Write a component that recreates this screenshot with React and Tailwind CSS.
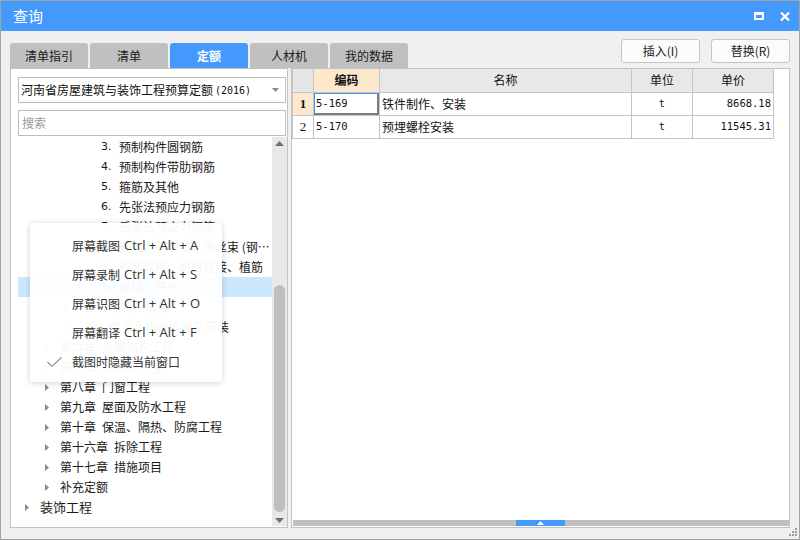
import React from 'react';

const tabs = ['清单指引', '清单', '定额', '人材机', '我的数据'];

// lv: 0 = 顶层, 1 = 章, 2 = 节, 3 = 叶子 (带序号)
const tree = [
  { lv: 3, num: '3.', t: '预制构件圆钢筋' },
  { lv: 3, num: '4.', t: '预制构件带肋钢筋' },
  { lv: 3, num: '5.', t: '箍筋及其他' },
  { lv: 3, num: '6.', t: '先张法预应力钢筋' },
  { lv: 3, num: '7.', t: '后张法预应力钢筋' },
  { lv: 3, num: '8.', t: '预应力钢绞线、钢丝束 (钢…' },
  { lv: 3, num: '9.', t: '钢筋焊接、机械连接、植筋' },
  { lv: 3, num: '10.', t: '螺栓、铁件', sel: true },
  { lv: 2, t: '三、混凝土模板' },
  { lv: 2, t: '四、混凝土构件运输及安装' },
  { lv: 1, t: '第六章\u2002金属结构工程' },
  { lv: 1, t: '第七章\u2002木结构工程' },
  { lv: 1, t: '第八章\u2002门窗工程' },
  { lv: 1, t: '第九章\u2002屋面及防水工程' },
  { lv: 1, t: '第十章\u2002保温、隔热、防腐工程' },
  { lv: 1, t: '第十六章\u2002拆除工程' },
  { lv: 1, t: '第十七章\u2002措施项目' },
  { lv: 1, t: '补充定额' },
  { lv: 0, t: '装饰工程' },
];

const indent = ['pl-[6px]', 'pl-[26px]', 'pl-[46px]'];

const menu = [
  ['屏幕截图', 'Ctrl + Alt + A'],
  ['屏幕录制', 'Ctrl + Alt + S'],
  ['屏幕识图', 'Ctrl + Alt + O'],
  ['屏幕翻译', 'Ctrl + Alt + F'],
];

function Arrow() {
  return (
    <svg width="4" height="7" viewBox="0 0 4 7" className="ml-[1px]">
      <path d="M0 0 L4 3.5 L0 7 Z" fill="#8a8a8a" />
    </svg>
  );
}

function TreeRow({ item }) {
  const base = 'h-[20px] flex items-center whitespace-nowrap text-[12px] text-[#1a1a1a]';
  if (item.lv === 3) {
    return (
      <div className={`${base} pl-[83px] ${item.sel ? 'bg-[#cce8ff]' : ''}`}>
        <span className="w-[18px] font-['DejaVu_Sans',sans-serif] text-[11px]">{item.num}</span>
        <span>{item.t}</span>
      </div>
    );
  }
  return (
    <div className={`${base} ${indent[item.lv]}`}>
      <span className="w-[16px] flex items-center">
        <Arrow />
      </span>
      <span className={item.lv === 0 ? 'text-[13px]' : item.lv === 2 ? 'pl-[5px]' : ''}>{item.t}</span>
    </div>
  );
}

export default function App() {
  return (
    <div className="w-[800px] h-[540px] border border-[#a3a3a3] bg-[#f0f0f0] flex flex-col relative overflow-hidden font-['Noto_Sans_CJK_SC','Liberation_Sans',sans-serif]">
      {/* title bar */}
      <div className="h-[30px] bg-[#4499fd] flex items-center pl-[12px] text-white text-[15px]">
        <span>查询</span>
        <div className="ml-auto flex items-center gap-[16px] pr-[9px]">
          <svg width="10" height="8" viewBox="0 0 10 8">
            <rect x="1" y="1.5" width="8" height="5.5" fill="none" stroke="#fff" strokeWidth="2" />
            <rect x="0" y="0" width="10" height="3" fill="#fff" />
          </svg>
          <svg width="10" height="9" viewBox="0 0 10 9">
            <path d="M1 0.5 L9 8.5 M9 0.5 L1 8.5" stroke="#fff" strokeWidth="2.2" />
          </svg>
        </div>
      </div>

      <div className="flex-1 flex flex-col pl-[9px] pr-[9px] pb-[11px]">
        {/* tabs + buttons */}
        <div className="h-[37px] flex">
          <div className="flex items-end gap-[2px]">
            {tabs.map((t) => (
              <div
                key={t}
                className={`w-[78px] h-[25px] rounded-t-[3px] flex items-center justify-center text-[12px] ${
                  t === '定额' ? 'bg-[#4499fd] text-white font-bold' : 'bg-[#c0c0c0] text-[#1a1a1a]'
                }`}
              >
                {t}
              </div>
            ))}
          </div>
          <div className="ml-auto flex gap-[11px] pt-[8px]">
            {['插入(I)', '替换(R)'].map((b) => (
              <div
                key={b}
                className="w-[79px] h-[24px] bg-[#fbfbfb] border border-[#c6c6c6] rounded-[3px] flex items-center justify-center text-[12px] text-[#222]"
              >
                {b}
              </div>
            ))}
          </div>
        </div>

        {/* panels */}
        <div className="flex-1 flex gap-[3px] min-h-0">
          {/* left */}
          <div className="w-[278px] bg-white border border-[#c3c3c3] flex flex-col">
            <div className="ml-[7px] mr-[1px] mt-[8px] h-[26px] border border-[#bdbdbd] flex items-center pl-[2px] text-[12px] text-[#111]">
              <span>河南省房屋建筑与装饰工程预算定额</span>
              <span className="font-['DejaVu_Sans_Mono',monospace] text-[10px] ml-[2px]">(2016)</span>
              <svg width="7" height="4" viewBox="0 0 7 4" className="ml-auto mr-[6px]">
                <path d="M0 0 L7 0 L3.5 4 Z" fill="#8a8a8a" />
              </svg>
            </div>
            <div className="ml-[7px] mr-[1px] mt-[7px] h-[26px] border border-[#bdbdbd] flex items-center pl-[3px] text-[12px] text-[#9a9a9a]">
              搜索
            </div>
            <div className="flex-1 flex pl-[7px] mt-[1px] mb-[1px] min-h-0">
              <div className="flex-1 overflow-hidden">
                {tree.map((it, i) => (
                  <TreeRow key={i} item={it} />
                ))}
              </div>
              {/* vertical scrollbar */}
              <div className="w-[15px] bg-[#e8e8e8] flex flex-col items-center">
                <div className="h-[12px] flex items-center justify-center">
                  <svg width="9" height="5" viewBox="0 0 9 5">
                    <path d="M0 5 L4.5 0 L9 5 Z" fill="#6f6f7a" />
                  </svg>
                </div>
                <div className="flex-1 w-full px-[2px]">
                  <div className="mt-[136px] h-[227px] rounded-full bg-[#bebebe]" />
                </div>
                <div className="h-[12px] flex items-center justify-center">
                  <svg width="9" height="5" viewBox="0 0 9 5">
                    <path d="M0 0 L9 0 L4.5 5 Z" fill="#6f6f7a" />
                  </svg>
                </div>
              </div>
            </div>
          </div>

          {/* right */}
          <div className="flex-1 bg-white border border-[#c3c3c3] flex flex-col">
            <table className="border-collapse text-[12px] text-[#111] table-fixed w-[481px]">
              <colgroup>
                <col className="w-[21px]" />
                <col className="w-[66px]" />
                <col className="w-[252px]" />
                <col className="w-[61px]" />
                <col className="w-[81px]" />
              </colgroup>
              <thead>
                <tr className="h-[23px]">
                  <th className="border border-[#c4c4c4] border-t-0 bg-[#e6e6e6]" />
                  <th className="border border-[#c4c4c4] border-t-0 bg-[#fde8cd] font-bold">编码</th>
                  <th className="border border-[#c4c4c4] border-t-0 bg-[#e8e8e8] font-normal">名称</th>
                  <th className="border border-[#c4c4c4] border-t-0 bg-[#e8e8e8] font-normal">单位</th>
                  <th className="border border-[#c4c4c4] border-t-0 bg-[#e8e8e8] font-normal">单价</th>
                </tr>
              </thead>
              <tbody>
                <tr className="h-[23px]">
                  <td className="border border-[#c4c4c4] bg-[#fde8cd] text-center font-['Liberation_Serif',serif] font-bold text-[13px]">1</td>
                  <td className="border border-[#c4c4c4] pl-[2px] font-['DejaVu_Sans_Mono',monospace] text-[10.5px] shadow-[inset_1px_1px_0_#3d95f5,inset_-2px_-2px_0_#7d7d7d]">5-169</td>
                  <td className="border border-[#c4c4c4] pl-[2px]">铁件制作、安装</td>
                  <td className="border border-[#c4c4c4] text-center font-['DejaVu_Sans_Mono',monospace] text-[10.5px]">t</td>
                  <td className="border border-[#c4c4c4] text-right pr-[2px] font-['DejaVu_Sans_Mono',monospace] text-[10.5px]">8668.18</td>
                </tr>
                <tr className="h-[23px]">
                  <td className="border border-[#c4c4c4] text-center font-['Liberation_Serif',serif] text-[13px]">2</td>
                  <td className="border border-[#c4c4c4] pl-[2px] font-['DejaVu_Sans_Mono',monospace] text-[10.5px]">5-170</td>
                  <td className="border border-[#c4c4c4] pl-[2px]">预埋螺栓安装</td>
                  <td className="border border-[#c4c4c4] text-center font-['DejaVu_Sans_Mono',monospace] text-[10.5px]">t</td>
                  <td className="border border-[#c4c4c4] text-right pr-[2px] font-['DejaVu_Sans_Mono',monospace] text-[10.5px]">11545.31</td>
                </tr>
              </tbody>
            </table>
            <div className="flex-1" />
            {/* horizontal scrollbar */}
            <div className="h-[6px] mb-[1px] ml-[1px] bg-[#c0c0c0] flex">
              <div className="ml-[223px] w-[49px] h-full bg-[#4499fd] flex items-center justify-center">
                <svg width="7" height="4" viewBox="0 0 7 4">
                  <path d="M0 4 L3.5 0 L7 4 Z" fill="#fff" />
                </svg>
              </div>
            </div>
          </div>
        </div>
      </div>

      {/* resize grip */}
      <div className="absolute right-[2px] bottom-[3px] grid grid-cols-3 gap-[1px] w-[8px] h-[8px]">
        <span />
        <span />
        <span className="bg-[#9a9a9a]" />
        <span />
        <span className="bg-[#9a9a9a]" />
        <span className="bg-[#9a9a9a]" />
        <span className="bg-[#9a9a9a]" />
        <span className="bg-[#9a9a9a]" />
        <span className="bg-[#9a9a9a]" />
      </div>

      {/* context menu */}
      <div className="absolute left-[29px] top-[222px] w-[192px] h-[159px] rounded-[4px] bg-white/[0.96] shadow-[0_1px_6px_rgba(0,0,0,0.18)] pt-[8px]">
        {menu.map(([a, b]) => (
          <div key={a} className="h-[29px] flex items-center pl-[42px] text-[12px] text-[#333]">
            <span>{a}</span>
            <span className="ml-[4px] font-['Open_Sans',sans-serif] text-[13px]">{b}</span>
          </div>
        ))}
        <div className="h-[29px] flex items-center pl-[17px] text-[12px] text-[#333]">
          <svg width="15" height="10" viewBox="0 0 15 10" className="mr-[10px]">
            <path d="M0.5 5 L5 9.3 L14.5 0.5" fill="none" stroke="#8a8a8a" strokeWidth="1.1" />
          </svg>
          截图时隐藏当前窗口
        </div>
      </div>
    </div>
  );
}
